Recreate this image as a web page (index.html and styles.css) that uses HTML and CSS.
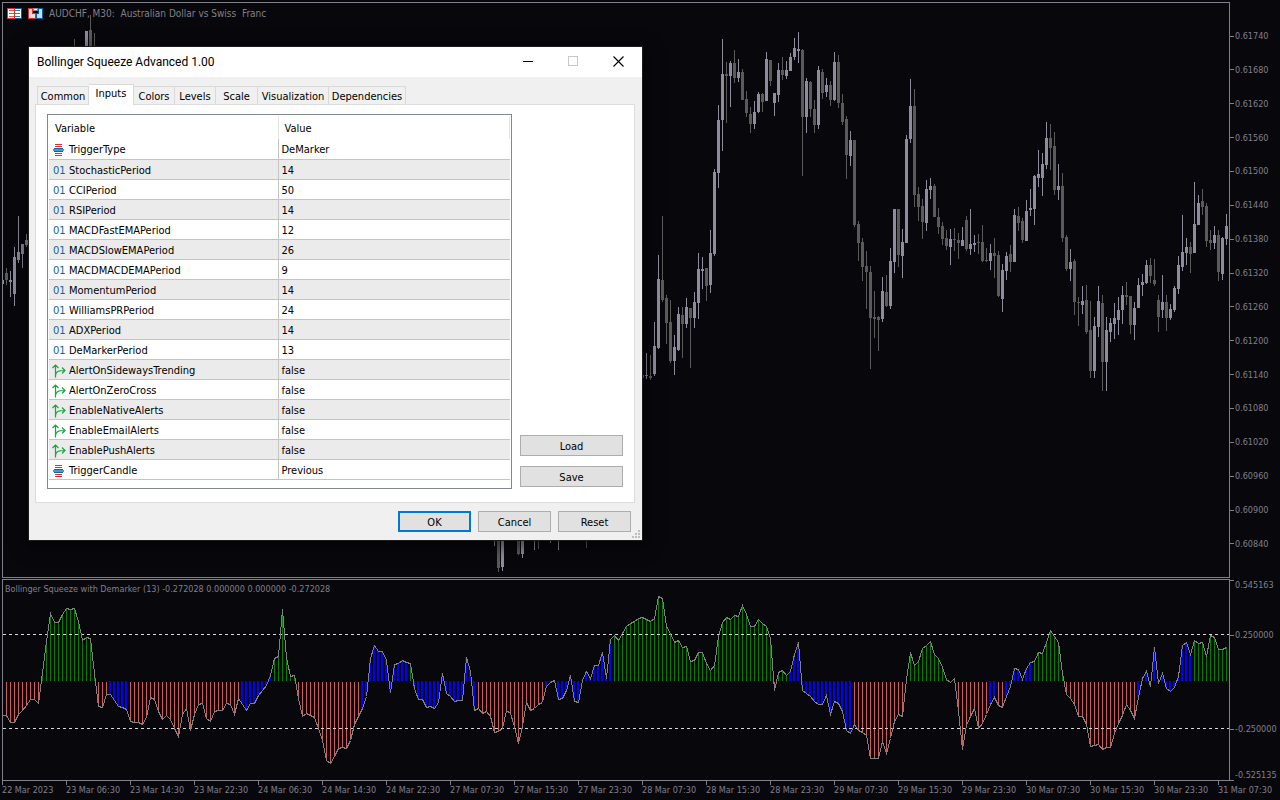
FILE: index.html
```html
<!DOCTYPE html>
<html lang="en">
<head>
<meta charset="utf-8">
<title>AUDCHF, M30</title>
<link rel="stylesheet" href="styles.css">
</head>
<body>
<main class="terminal">
  <section class="pane pane-price" aria-label="Price chart">
    <header class="chart-title">
      <svg class="title-icon" width="15" height="12" viewBox="0 0 15 12" shape-rendering="crispEdges" aria-hidden="true">
        <rect x="0" y="0" width="8" height="11" fill="#d9302c"/><rect x="8" y="0" width="7" height="11" fill="#0a5c9e"/>
        <rect x="1" y="1" width="6" height="9" fill="#fff"/><rect x="8" y="1" width="6" height="9" fill="#fff"/>
        <path d="M2 2.5h5M2 5.5h5M2 8.5h5" stroke="#e8534f"/><path d="M8 2.5h5M8 5.5h5M8 8.5h5" stroke="#2f7fbf"/>
      </svg>
      <svg class="title-icon" width="15" height="12" viewBox="0 0 15 12" shape-rendering="crispEdges" aria-hidden="true">
        <path d="M0 0h5v5h3v6H0z" fill="#d9302c"/><path d="M1 1h3v5h3v4H1z" fill="#ffd9d6"/>
        <path d="M10 0h5v11H8V5h2z" fill="#0a5c9e"/><path d="M11 1h3v9H9V6h2z" fill="#b5e3ff"/>
        <rect x="5" y="0" width="5" height="3" fill="#8a8a8a"/><rect x="6" y="1" width="3" height="1" fill="#fff"/>
      </svg>
      <span>AUDCHF, M30:&nbsp; Australian Dollar vs Swiss&nbsp; Franc</span>
    </header>
    <svg class="plot" id="candles" viewBox="3 3 1226 574" preserveAspectRatio="none" shape-rendering="crispEdges"></svg>
  </section>
  <ol class="scale scale-price">
    <li>0.61740</li><li>0.61680</li><li>0.61620</li><li>0.61560</li><li>0.61500</li><li>0.61440</li><li>0.61380</li><li>0.61320</li><li>0.61260</li><li>0.61200</li><li>0.61140</li><li>0.61080</li><li>0.61020</li><li>0.60960</li><li>0.60900</li><li>0.60840</li>
  </ol>
  <section class="pane pane-squeeze" aria-label="Bollinger Squeeze">
    <header class="indicator-title">Bollinger Squeeze with Demarker (13) -0.272028 0.000000 0.000000 -0.272028</header>
    <svg class="plot" id="squeeze" viewBox="3 580 1226 200" preserveAspectRatio="none" shape-rendering="crispEdges"></svg>
  </section>
  <ol class="scale scale-squeeze">
    <li class="top">0.545163</li><li>0.250000</li><li>-0.250000</li><li class="bottom">-0.525135</li>
  </ol>
  <ol class="time-axis">
    <li>22 Mar 2023</li><li>23 Mar 06:30</li><li>23 Mar 14:30</li><li>23 Mar 22:30</li><li>24 Mar 06:30</li><li>24 Mar 14:30</li><li>24 Mar 22:30</li><li>27 Mar 07:30</li><li>27 Mar 15:30</li><li>27 Mar 23:30</li><li>28 Mar 07:30</li><li>28 Mar 15:30</li><li>28 Mar 23:30</li><li>29 Mar 07:30</li><li>29 Mar 15:30</li><li>29 Mar 23:30</li><li>30 Mar 07:30</li><li>30 Mar 15:30</li><li>30 Mar 23:30</li><li>31 Mar 07:30</li>
  </ol>
</main>

<div class="dialog" role="dialog" aria-labelledby="dialog-title">
  <header class="titlebar">
    <h1 id="dialog-title">Bollinger Squeeze Advanced 1.00</h1>
    <button class="caption" type="button" aria-label="Minimize"><svg width="11" height="11" shape-rendering="crispEdges"><path d="M0 5.5h10" stroke="#000"/></svg></button>
    <button class="caption" type="button" aria-label="Maximize" disabled><svg width="11" height="11" shape-rendering="crispEdges"><path d="M.5.5h9v9h-9z" fill="none" stroke="#c8c8c8"/></svg></button>
    <button class="caption" type="button" aria-label="Close"><svg width="11" height="11"><path d="M.5.5l10 10M10.5.5l-10 10" stroke="#000" stroke-width="1.1"/></svg></button>
  </header>
  <div class="dialog-body">
    <nav class="tabs" role="tablist">
      <button type="button" role="tab">Common</button><button type="button" role="tab" class="active" aria-selected="true">Inputs</button><button type="button" role="tab">Colors</button><button type="button" role="tab">Levels</button><button type="button" role="tab">Scale</button><button type="button" role="tab">Visualization</button><button type="button" role="tab">Dependencies</button>
    </nav>
    <div class="panel">
      <div class="grid-box">
        <table class="inputs">
          <colgroup><col class="col-name"><col></colgroup>
          <thead><tr><th scope="col">Variable</th><th scope="col">Value</th></tr></thead>
          <tbody id="rows"></tbody>
        </table>
      </div>
      <div class="side">
        <button class="btn" type="button">Load</button>
        <button class="btn" type="button">Save</button>
      </div>
    </div>
    <footer class="actions">
      <button class="btn default" type="button">OK</button>
      <button class="btn" type="button">Cancel</button>
      <button class="btn" type="button">Reset</button>
    </footer>
  </div>
  <svg class="grip" width="8" height="8" shape-rendering="crispEdges" fill="#bfbfbf" aria-hidden="true"><path d="M6 0h2v2h-2zM3 3h2v2h-2zM6 3h2v2h-2zM0 6h2v2h-2zM3 6h2v2h-2zM6 6h2v2h-2z"/></svg>
</div>
<script src="script.js"></script>
</body>
</html>
```

FILE: styles.css
```css
* { box-sizing: border-box; }

:root {
  --ink: #80808a;
  --ground: #08070c;
  --chart-font: "DejaVu Sans Condensed", "DejaVu Sans", sans-serif;
  --ui-font: "DejaVu Sans Condensed", "DejaVu Sans", sans-serif;
}

body {
  margin: 0;
  background: var(--ground);
  color: var(--ink);
  font: 9px/12px var(--chart-font);
  overflow: hidden;
}

ol { margin: 0; padding: 0; list-style: none; }
button { font: inherit; color: inherit; }

.terminal {
  display: grid;
  grid-template-columns: minmax(0, 1fr) 50px;
  grid-template-rows: minmax(0, 1fr) 202px 18px;
  row-gap: 1px;
  height: 100vh;
  padding: 2px 0 0 2px;
}

.pane { position: relative; min-height: 0; border: 1px solid var(--ink); overflow: hidden; }
.plot { display: block; width: 100%; height: 100%; }

.chart-title {
  position: absolute;
  top: 5px;
  left: 4px;
  display: flex;
  gap: 6px;
  font-size: 10px;
}
.indicator-title { position: absolute; top: 3px; left: 2px; }

.scale li { display: flex; align-items: center; gap: 1px; height: 12px; white-space: nowrap; }
.scale li::before { content: ""; width: 4px; height: 1px; background: var(--ink); }
.scale-price { display: flex; flex-direction: column; justify-content: space-between; padding: 28px 0; }
.scale-squeeze { display: grid; grid-template-rows: 50px 94px 46px 12px; }
.scale-squeeze .top::before { align-self: flex-start; margin-top: 1px; }
.scale-squeeze .bottom::before { align-self: flex-end; }

.time-axis { grid-column: 1 / -1; display: grid; grid-template-columns: repeat(20, 1fr); margin: -1px -2px 0 0; }
.time-axis li { position: relative; padding-top: 3px; white-space: nowrap; }
.time-axis li::before { content: ""; position: absolute; top: 0; left: 0; width: 1px; height: 4px; background: var(--ink); }

.dialog {
  position: absolute;
  top: 47px;
  left: 29px;
  width: 613px;
  background: #f0f0f0;
  color: #000;
  font: 11px/14px var(--ui-font);
  box-shadow: 0 0 0 1px #1c1c1c, 0 4px 14px 4px rgba(0, 0, 0, .5);
}
.titlebar { display: flex; height: 30px; padding: 0 1px 0 8px; background: #fff; }
.titlebar h1 { flex: 1; margin: 0; font: 12px/30px Roboto, "Open Sans", sans-serif; }
.caption { width: 45px; padding: 0 0 2px; border: 0; background: none; line-height: 0; }

.dialog-body { padding: 7px 7px 8px 6px; }
.tabs {
  display: grid;
  grid-template-columns: 52px 45px 41px 41px 42px 71px 77px;
  align-items: end;
  height: 20px;
  padding-left: 2px;
}
.tabs button {
  height: 18px;
  padding: 2px 0 0;
  border: 1px solid #d9d9d9;
  border-width: 1px 1px 0 0;
  background: #f0f0f0;
}
.tabs button:first-child { border-left-width: 1px; }
.tabs .active { position: relative; height: 21px; margin-bottom: -1px; padding: 0 0 2px; background: #fff; }

.panel {
  display: flex;
  gap: 8px;
  padding: 9px 11px 13px;
  border: 1px solid #dcdcdc;
  background: #fff;
}
.grid-box { flex: 1; height: 375px; padding: 1px; border: 1px solid #828790; }
.inputs { width: 100%; border-collapse: collapse; table-layout: fixed; }
.col-name { width: 229px; }
.inputs th { height: 23px; padding: 3px 6px 0; border-right: 1px solid #e5e5e5; font-weight: 400; text-align: left; }
.inputs td { height: 20px; padding: 3px 3px 0; border-bottom: 1px solid #c4c4c4; }
.inputs tbody td:first-child { border-right: 1px solid #c4c4c4; }
.inputs tbody tr:nth-child(even) { background: #ebebeb; }
.cell { display: flex; align-items: center; gap: 3px; }
.cell svg { flex: none; width: 14px; height: 14px; }
.int-mark { flex: none; width: 14px; padding-left: 1px; color: #1464a0; font: 10px/14px "DejaVu Sans", sans-serif; }

.side { display: flex; flex-direction: column; justify-content: flex-end; gap: 10px; width: 103px; padding-bottom: 2px; }
.btn { height: 21px; padding: 2px 0 0; border: 1px solid #adadad; background: #e1e1e1; }
.btn.default { border: 2px solid #0078d7; }
.actions { display: flex; justify-content: flex-end; gap: 7px; padding: 8px 4px 0 0; }
.actions .btn { width: 73px; }
.grip { position: absolute; right: 2px; bottom: 2px; }
```

FILE: script.js
```js
const LIGHT = "#8c8c9c";
const DARK = "#5a5a5a";

// Each bar: x, high, body top, body bottom, low, rising (1) or falling (0).
const bars = [
  [2,267,280,284,287,1],[6,268,273,280,285,0],[10,271,280,282,297,1],[14,247,257,294,306,1],[18,216,252,260,263,1],[22,244,244,254,268,1],[26,234,240,245,247,1],
  [74,39,60,60,60,0],[86,31,31,60,60,1],[90,15,30,60,60,0],[94,33,60,60,60,0],
  [494,500,500,500,546,1],[498,500,500,568,572,0],[502,500,500,567,571,1],[518,500,500,554,555,0],[522,500,500,554,558,1],[534,500,500,500,550,1],[538,500,500,500,549,0],[550,500,500,500,543,1],[558,500,500,500,550,1],[586,500,500,500,548,0]
];
const run = [
  [355,375,378,382,0],[353,375,376,379,1],[355,376,378,380,0],[322,346,374,376,1],[255,279,348,349,1],[216,280,300,302,0],[295,298,323,344,0],[300,322,361,363,0],[335,347,361,375,1],[307,314,350,351,1],[307,315,324,358,0],
  [298,307,324,328,1],[308,308,318,368,0],[292,302,318,328,1],[253,269,303,319,1],[257,269,271,289,1],[268,268,286,301,0],[230,253,285,293,1],[169,172,254,256,1],[105,120,173,188,1],[39,74,120,151,1],
  [62,74,76,123,0],[61,63,76,107,1],[50,63,78,83,0],[59,72,78,82,1],[69,72,100,100,0],[91,99,113,117,0],[107,114,124,133,0],[101,112,124,129,1],[92,94,112,113,1],[93,94,102,112,0],
  [52,59,101,101,1],[60,60,81,86,0],[93,93,103,116,1],[63,70,95,102,1],[57,70,75,80,0],[61,70,76,79,1],[53,57,71,71,1],[38,48,57,60,1],[32,49,51,63,1],[49,50,117,176,0],
  [78,81,117,133,1],[81,82,109,117,0],[100,109,125,133,0],[66,70,125,129,1],[69,72,93,99,0],[78,85,92,97,1],[81,85,100,106,0],[52,62,100,101,1],[55,62,103,108,0],[94,103,122,125,0],
  [116,119,155,179,0],[131,140,156,166,1],[140,140,225,227,0],[221,224,243,261,0],[238,242,267,281,0],[251,266,272,309,0],[266,272,318,369,0],[291,317,319,338,0],[316,317,320,351,0],[277,291,319,322,1],
  [275,292,306,307,0],[248,261,306,309,1],[209,209,262,273,1],[209,209,255,267,0],[229,242,256,278,1],[135,139,243,243,1],[79,106,139,143,1],[89,106,195,207,0],[187,194,207,221,0],[199,206,222,239,0],
  [180,189,223,231,1],[178,186,190,199,1],[184,186,217,217,0],[208,217,227,234,0],[222,226,239,245,0],[230,238,246,250,0],[229,239,247,265,1],[228,239,240,251,0],[233,240,243,259,0],[227,240,246,246,1],
  [216,220,249,251,0],[209,244,249,255,1],[235,243,245,252,1],[234,242,243,254,0],[225,242,261,262,0],[248,260,261,262,0],[244,253,261,270,1],[238,253,256,278,0],[251,255,296,297,0],[264,270,299,312,1],
  [252,256,271,280,1],[245,254,262,272,0],[209,215,262,262,1],[207,216,223,231,0],[218,221,240,243,0],[200,211,241,241,1],[189,208,210,216,1],[175,176,209,225,1],[150,174,178,187,1],[153,164,178,196,1],
  [122,138,165,169,1],[124,138,148,170,0],[132,146,190,195,0],[164,186,190,200,1],[173,186,238,242,0],[235,237,269,271,0],[249,262,269,281,1],[259,261,302,315,0],[297,302,303,326,0],[286,301,305,314,1],
  [285,300,332,334,0],[301,330,371,378,0],[317,326,371,378,1],[286,301,327,337,1],[295,303,362,391,0],[317,330,362,391,1],[318,323,332,342,1],[303,318,324,339,1],[297,310,320,335,1],[286,295,310,324,1],
  [282,295,297,305,0],[296,296,325,334,0],[302,308,325,340,1],[278,285,308,308,1],[274,282,285,296,1],[260,265,283,284,1],[258,265,276,283,0],[259,280,284,286,0],[295,300,317,332,0],[275,302,310,318,1],
  [295,302,318,331,0],[304,309,318,320,1],[286,288,310,312,1],[256,265,289,294,1],[215,252,267,271,1],[238,247,253,265,1],[242,247,254,273,0],[182,224,253,253,1],[195,203,225,225,1],[189,201,207,215,0],
  [203,206,241,247,0],[230,240,243,250,0],[226,235,243,249,1],[230,235,272,281,0],[237,238,274,280,1],[214,226,239,245,1]
];
run.forEach((b, i) => bars.push([642 + i * 4, ...b]));

let candles = "";
for (const [x, high, top, bottom, low, rising] of bars) {
  const fill = rising ? LIGHT : DARK;
  candles += `<rect x="${x}" y="${high}" width="1" height="${low - high}" fill="${fill}"/>`;
  if (bottom > top) candles += `<rect x="${x - 1}" y="${top}" width="3" height="${bottom - top}" fill="${fill}"/>`;
}
document.getElementById("candles").innerHTML = candles;

// Oscillator level for every bar, four units apart.
const levels = [
  715,715,722,722,714,710,705,699,699,703,672,641,613,622,622,614,608,609,608,621,640,637,638,673,706,707,694,694,700,706,707,709,721,722,722,724,717,697,699,711,
  719,715,719,728,736,714,708,730,714,704,703,718,721,711,710,710,703,704,714,698,704,710,703,703,695,690,685,675,658,656,609,657,676,675,698,716,713,715,717,728,
  740,760,763,756,748,747,748,740,724,716,708,696,658,645,651,651,660,692,664,663,660,662,663,688,699,699,707,706,708,702,673,693,696,701,700,700,657,671,710,708,
  713,711,716,732,731,728,710,713,726,743,726,702,710,708,704,702,686,682,680,699,698,690,675,701,702,680,671,678,665,665,652,678,639,635,640,633,626,623,621,618,
  617,619,621,618,596,598,626,633,642,640,647,646,661,660,652,652,663,670,665,636,622,617,619,615,616,605,614,626,626,619,623,626,638,690,672,670,675,671,654,642,
  690,693,696,701,704,704,695,714,701,703,711,730,733,724,730,732,735,758,758,758,741,753,738,721,714,716,679,652,665,661,648,645,641,654,658,667,679,682,678,711,
  749,725,716,708,728,723,714,704,697,705,707,696,686,668,669,679,668,662,661,652,653,642,630,636,642,673,694,698,704,716,716,724,746,745,744,749,747,747,733,723,
  715,704,710,718,697,678,671,686,647,683,673,688,691,687,676,645,642,654,640,643,642,656,635,637,649,649,647
];
const squeezes = [[110,126],[242,270],[362,406],[414,474],[546,610],[790,850],[990,994],[1006,1030],[1138,1190]];

let squeeze = "";
levels.forEach((y, i) => {
  const x = 2 + i * 4;
  const above = y < 681;
  const tight = squeezes.some(([from, to]) => x >= from && x <= to);
  const fill = tight ? "#0000ff" : above ? "#008000" : "#cd5c5c";
  const base = above || tight ? 681 : 682;
  const top = above ? y : base;
  const height = Math.abs(y - base);
  squeeze += `<rect x="${tight ? x - 1 : x}" y="${top}" width="${tight ? 2 : 1}" height="${height}" fill="${fill}"/>`;
});
squeeze += `<path d="M3 634.5H1229M3 728.5H1229" stroke="#d8d8d8" stroke-dasharray="3 3"/>`;
squeeze += `<polyline fill="none" stroke="#808080" points="${levels.map((y, i) => `${2.5 + i * 4},${y + 0.5}`).join(" ")}"/>`;
document.getElementById("squeeze").innerHTML = squeeze;

const icons = {
  list: `<svg viewBox="0 0 14 14" shape-rendering="crispEdges" aria-hidden="true"><path d="M3 1.5h7M3 3.5h7M3 10.5h7M3 12.5h7" stroke="#d9302c"/><path d="M2 5.5h9M2 8.5h9" stroke="#1464a0"/><path d="M1 6h11v2H1z" fill="#3f9bd8"/></svg>`,
  branch: `<svg viewBox="0 0 14 14" fill="none" stroke="#12a83c" stroke-width="1.2" aria-hidden="true"><path d="M3.5 13.5V1M.5 4l3-3 3 3M3.5 12c0-4 2-5.5 9-5.5M10 3.5l3 3-3 3"/></svg>`,
  number: `<span class="int-mark">01</span>`
};
const inputs = [
  ["list","TriggerType","DeMarker"],["number","StochasticPeriod","14"],["number","CCIPeriod","50"],["number","RSIPeriod","14"],["number","MACDFastEMAPeriod","12"],["number","MACDSlowEMAPeriod","26"],["number","MACDMACDEMAPeriod","9"],["number","MomentumPeriod","14"],["number","WilliamsPRPeriod","24"],["number","ADXPeriod","14"],["number","DeMarkerPeriod","13"],
  ["branch","AlertOnSidewaysTrending","false"],["branch","AlertOnZeroCross","false"],["branch","EnableNativeAlerts","false"],["branch","EnableEmailAlerts","false"],["branch","EnablePushAlerts","false"],["list","TriggerCandle","Previous"]
];
document.getElementById("rows").innerHTML = inputs.map(([type, name, value]) =>
  `<tr><td><div class="cell">${icons[type]}<span>${name}</span></div></td><td>${value}</td></tr>`).join("");
```
